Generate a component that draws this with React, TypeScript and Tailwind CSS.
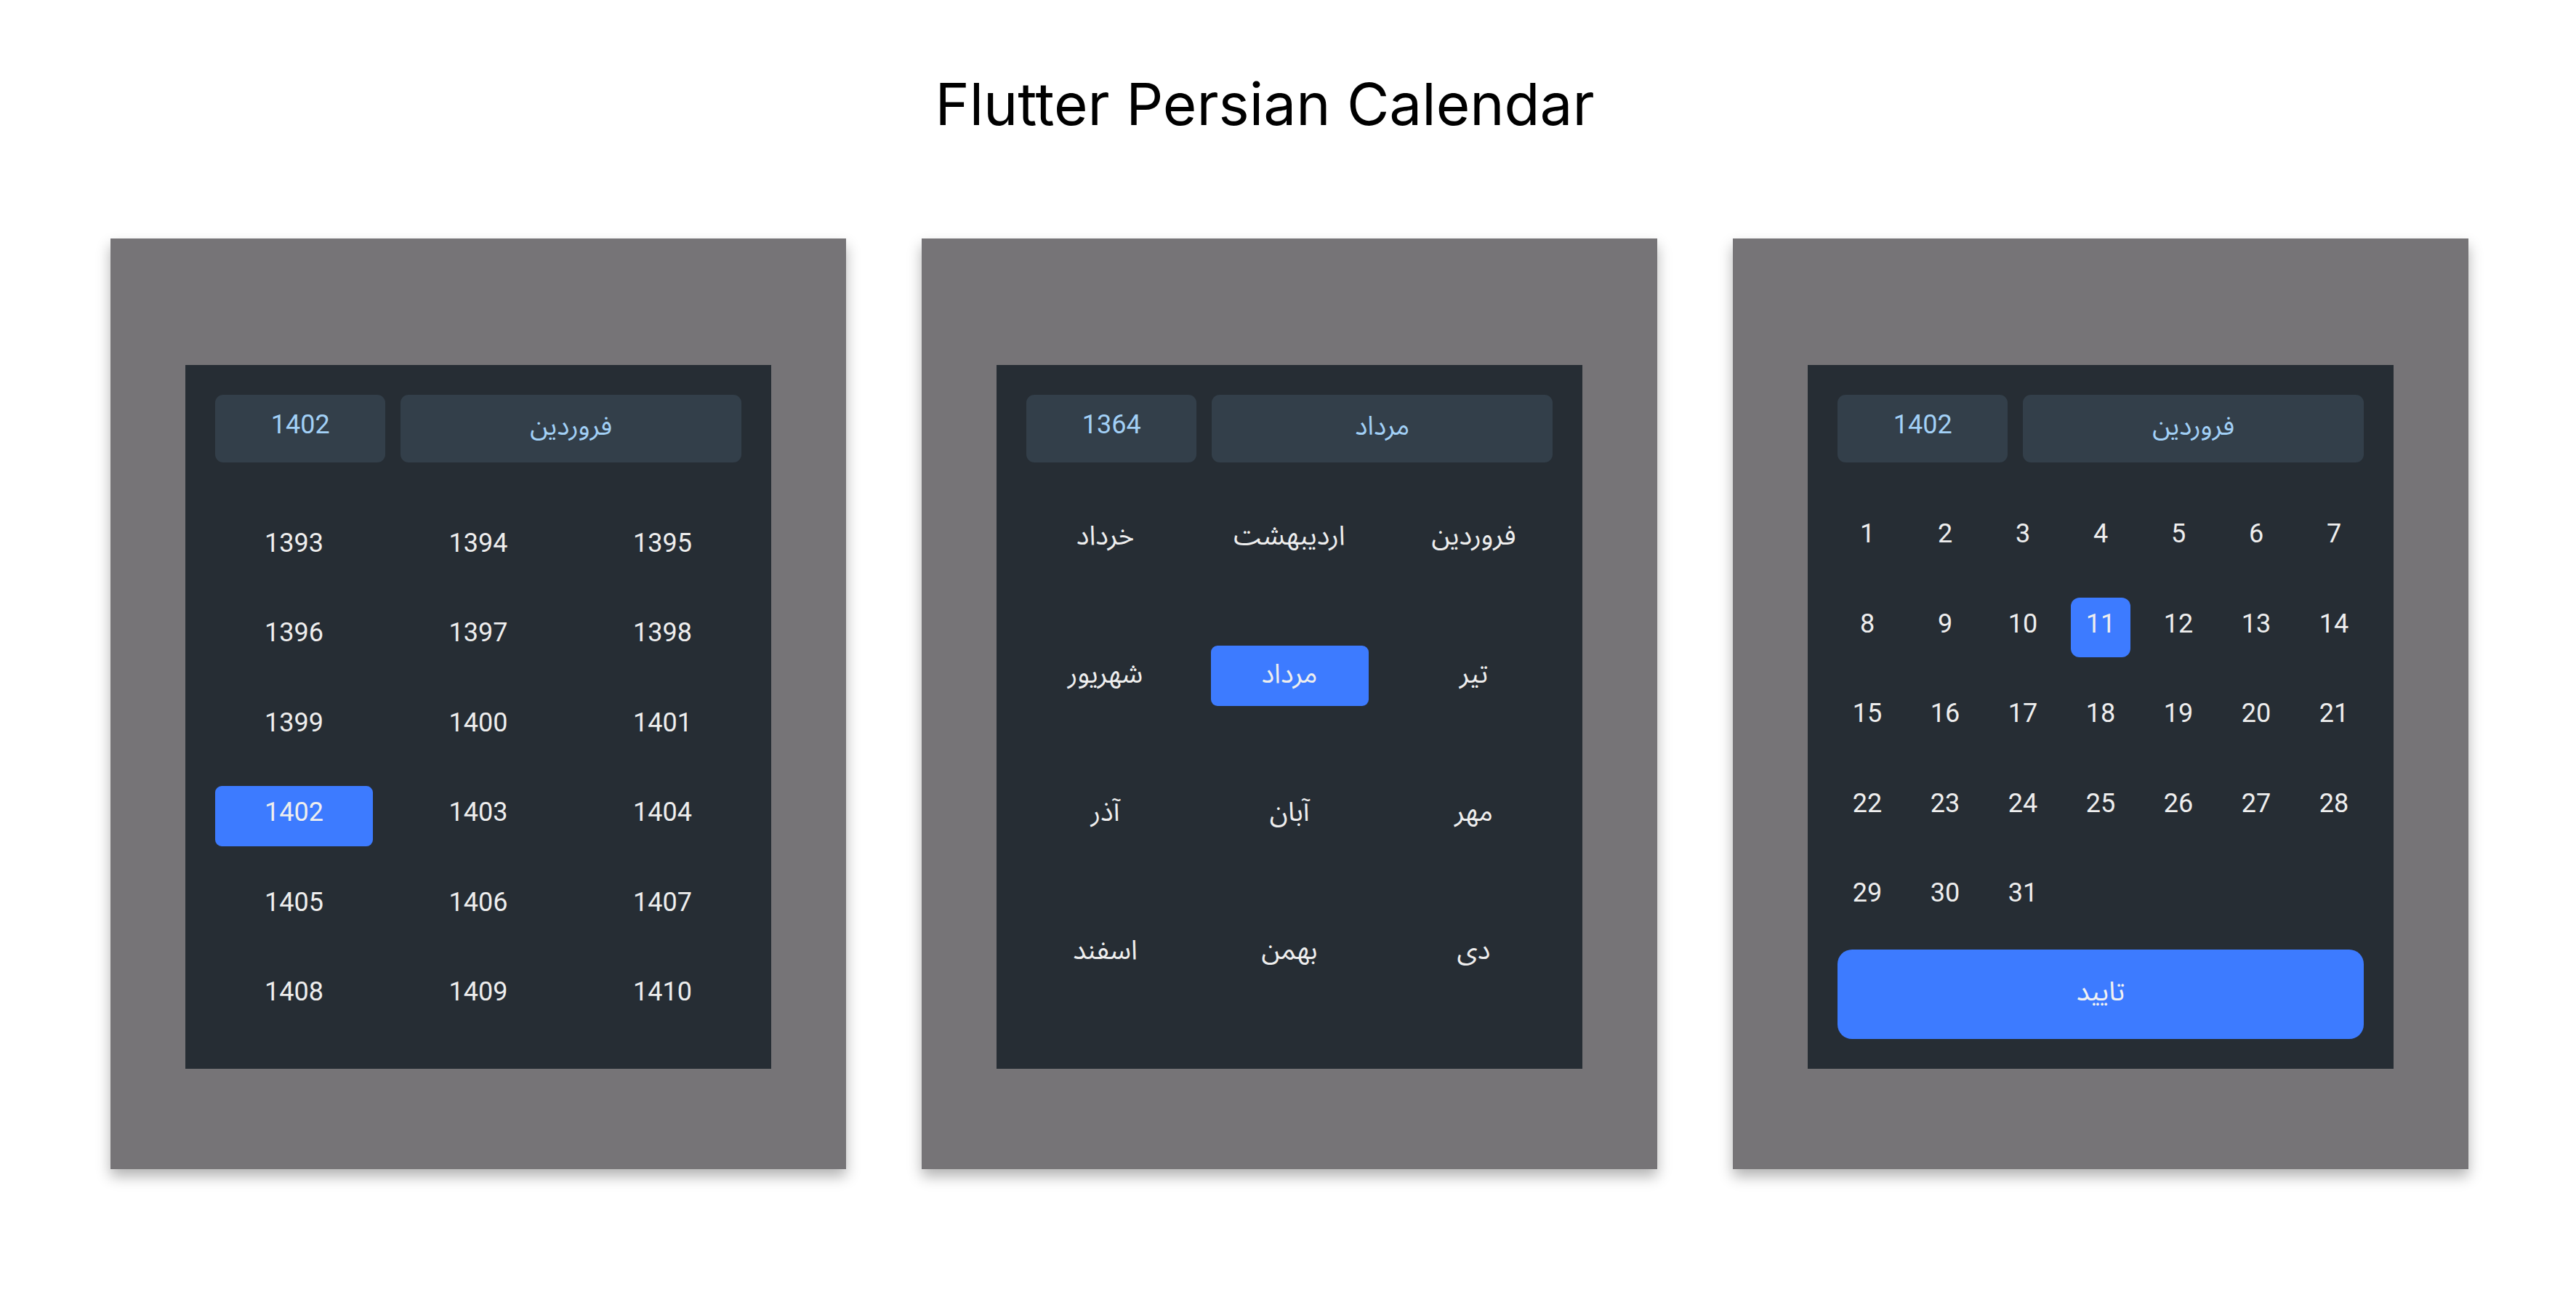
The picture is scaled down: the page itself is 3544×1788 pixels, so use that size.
import React from 'react'

const YEARS = Array.from({ length: 18 }, (_, i) => 1393 + i)
const MONTHS = ['فروردین', 'اردیبهشت', 'خرداد', 'تیر', 'مرداد', 'شهریور', 'مهر', 'آبان', 'آذر', 'دی', 'بهمن', 'اسفند']
const DAYS = Array.from({ length: 31 }, (_, i) => i + 1)

function Header({ year, month }: { year: string; month: string }) {
    return (
        <div className="flex gap-[21px] h-[93px] text-[36px] text-[#a2d0f6]">
            <div className="flex-1 rounded-[11px] bg-[#333f4a] flex items-center justify-center pb-[11px]">{year}</div>
            <div className="flex-[2] rounded-[11px] bg-[#333f4a] flex items-center justify-center pb-[8px]" dir="rtl">{month}</div>
        </div>
    )
}

function Frame({ children }: { children: React.ReactNode }) {
    return (
        <div className="w-[1012px] h-[1280px] bg-[#767477] shadow-[0_10px_18px_rgba(0,0,0,0.3)] flex justify-center pt-[174px]">
            <div className="w-[806px] h-[968px] bg-[#262d34] p-[41px] flex flex-col">
                {children}
            </div>
        </div>
    )
}

function YearPicker() {
    return (
        <Frame>
            <Header year="1402" month="فروردین" />
            <div className="mt-[74px] grid grid-cols-[217px_217px_217px] justify-between gap-y-[40.5px]">
                {YEARS.map(y => (
                    <div key={y} className={`h-[83px] rounded-[9px] flex items-center justify-center pb-[10px] text-[36px] text-[#eeeeee] ${y === 1402 ? 'bg-[#3d7bff]' : ''}`}>
                        {y}
                    </div>
                ))}
            </div>
        </Frame>
    )
}

function MonthPicker() {
    return (
        <Frame>
            <Header year="1364" month="مرداد" />
            <div dir="rtl" className="mt-[62px] grid grid-cols-[217px_217px_217px] justify-between gap-y-[107px]">
                {MONTHS.map(m => (
                    <div key={m} className={`h-[83px] rounded-[9px] flex items-center justify-center pb-[6px] text-[37px] text-[#eeeeee] ${m === 'مرداد' ? 'bg-[#3d7bff]' : ''}`}>
                        {m}
                    </div>
                ))}
            </div>
        </Frame>
    )
}

function DayPicker() {
    return (
        <Frame>
            <Header year="1402" month="فروردین" />
            <div className="mt-[62px] grid grid-cols-[repeat(7,82px)] justify-between gap-y-[41.5px]">
                {DAYS.map(d => (
                    <div key={d} className={`h-[82px] rounded-[12px] flex items-center justify-center pb-[10px] text-[36px] text-[#eeeeee] ${d === 11 ? 'bg-[#3d7bff]' : ''}`}>
                        {d}
                    </div>
                ))}
            </div>
            {/* confirm */}
            <button className="mt-[32px] h-[123px] w-full rounded-[20px] bg-[#3d7bff] text-[37px] text-[#f2f2f2] flex items-center justify-center pb-[8px]" dir="rtl">
                تایید
            </button>
        </Frame>
    )
}

export default function App() {
    return (
        <div className="min-h-screen w-full bg-white font-[Roboto,'Noto_Sans_Arabic','DejaVu_Sans',sans-serif]">
            <div className="pt-[103px] flex justify-center pr-[64px]">
                <h1 className="font-[Inter,sans-serif] text-[80px] leading-none font-normal text-black">Flutter Persian Calendar</h1>
            </div>
            <div className="mt-[145px] flex justify-center gap-[104px] pl-[4px]">
                <YearPicker />
                <MonthPicker />
                <DayPicker />
            </div>
        </div>
    )
}
